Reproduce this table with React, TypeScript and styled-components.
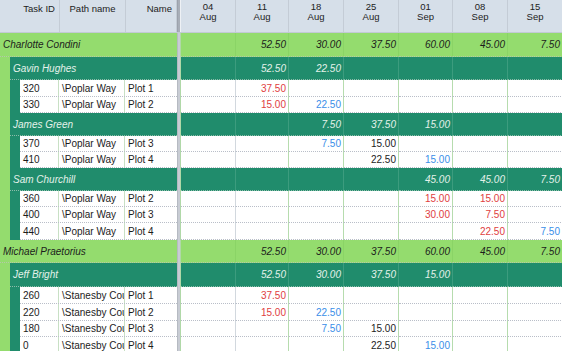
import React from 'react';
import styled, { createGlobalStyle, css } from 'styled-components';

type Tone = 'red' | 'blue' | 'black';
type Val = { v: string; tone?: Tone } | null;

type Row =
  | { kind: 'top'; name: string; h: number; vals: (string | null)[] }
  | { kind: 'sub'; name: string; h: number; vals: (string | null)[] }
  | { kind: 'task'; id: string; path: string; plot: string; h: number; vals: Val[] };

const weeks = [
  { d: '04', m: 'Aug', w: 55 },
  { d: '11', m: 'Aug', w: 53 },
  { d: '18', m: 'Aug', w: 55 },
  { d: '25', m: 'Aug', w: 55 },
  { d: '01', m: 'Sep', w: 54 },
  { d: '08', m: 'Sep', w: 55 },
  { d: '15', m: 'Sep', w: 55 },
];

const r = (v: string): Val => ({ v, tone: 'red' });
const b = (v: string): Val => ({ v, tone: 'blue' });
const k = (v: string): Val => ({ v, tone: 'black' });

const rows: Row[] = [
  { kind: 'top', name: 'Charlotte Condini', h: 24, vals: [null, '52.50', '30.00', '37.50', '60.00', '45.00', '7.50'] },
  { kind: 'sub', name: 'Gavin Hughes', h: 23, vals: [null, '52.50', '22.50', null, null, null, null] },
  { kind: 'task', id: '320', path: '\\Poplar Way', plot: 'Plot 1', h: 17, vals: [null, r('37.50'), null, null, null, null, null] },
  { kind: 'task', id: '330', path: '\\Poplar Way', plot: 'Plot 2', h: 16, vals: [null, r('15.00'), b('22.50'), null, null, null, null] },
  { kind: 'sub', name: 'James Green', h: 23, vals: [null, null, '7.50', '37.50', '15.00', null, null] },
  { kind: 'task', id: '370', path: '\\Poplar Way', plot: 'Plot 3', h: 16, vals: [null, null, b('7.50'), k('15.00'), null, null, null] },
  { kind: 'task', id: '410', path: '\\Poplar Way', plot: 'Plot 4', h: 16, vals: [null, null, null, k('22.50'), b('15.00'), null, null] },
  { kind: 'sub', name: 'Sam Churchill', h: 23, vals: [null, null, null, null, '45.00', '45.00', '7.50'] },
  { kind: 'task', id: '360', path: '\\Poplar Way', plot: 'Plot 2', h: 16, vals: [null, null, null, null, r('15.00'), r('15.00'), null] },
  { kind: 'task', id: '400', path: '\\Poplar Way', plot: 'Plot 3', h: 16, vals: [null, null, null, null, r('30.00'), r('7.50'), null] },
  { kind: 'task', id: '440', path: '\\Poplar Way', plot: 'Plot 4', h: 17, vals: [null, null, null, null, null, r('22.50'), b('7.50')] },
  { kind: 'top', name: 'Michael Praetorius', h: 23, vals: [null, '52.50', '30.00', '37.50', '60.00', '45.00', '7.50'] },
  { kind: 'sub', name: 'Jeff Bright', h: 24, vals: [null, '52.50', '30.00', '37.50', '15.00', null, null] },
  { kind: 'task', id: '260', path: '\\Stanesby Court', plot: 'Plot 1', h: 17, vals: [null, r('37.50'), null, null, null, null, null] },
  { kind: 'task', id: '220', path: '\\Stanesby Court', plot: 'Plot 2', h: 17, vals: [null, r('15.00'), b('22.50'), null, null, null, null] },
  { kind: 'task', id: '180', path: '\\Stanesby Court', plot: 'Plot 3', h: 16, vals: [null, null, b('7.50'), k('15.00'), null, null, null] },
  { kind: 'task', id: '0', path: '\\Stanesby Court', plot: 'Plot 4', h: 17, vals: [null, null, null, k('22.50'), b('15.00'), null, null] },
];

const LIGHT = '#94dc6e';
const DARK = '#208c6c';

const GlobalStyle = createGlobalStyle`
  html, body {
    margin: 0;
    padding: 0;
    background: #ffffff;
  }
  body {
    font-family: "Liberation Sans", Arial, sans-serif;
    color: #1e1e1e;
  }
`;

const Sheet = styled.div`
  width: 562px;
  height: 351px;
  overflow: hidden;
  background: #ffffff;
`;

const HeaderRow = styled.div`
  display: flex;
  height: 33px;
  background: #d6dfe9;
  box-sizing: border-box;
  border-bottom: 1px solid #c2cad5;
`;

const HeadCell = styled.div<{ $w: number; $align: string }>`
  flex: none;
  width: ${({ $w }) => $w}px;
  box-sizing: border-box;
  border-right: 1px solid #c4ccd6;
  padding: 3px 4px 0 4px;
  font-size: 9.5px;
  line-height: 11px;
  color: #222;
  text-align: ${({ $align }) => $align};
  white-space: nowrap;
`;

const DateHead = styled.div<{ $w: number }>`
  flex: none;
  width: ${({ $w }) => $w}px;
  box-sizing: border-box;
  border-right: 1px solid #c4ccd6;
  padding-top: 2px;
  font-size: 9.5px;
  line-height: 10px;
  color: #222;
  text-align: center;
`;

const Splitter = styled.div<{ $head?: boolean }>`
  flex: none;
  width: 4px;
  box-sizing: border-box;
  background: ${({ $head }) => ($head ? '#a8aeb8' : '#c8ccd4')};
  border-left: 1px solid ${({ $head }) => ($head ? '#9ca2ac' : '#b6bac2')};
  border-right: 1px solid ${({ $head }) => ($head ? '#eef1f5' : '#b0d8a8')};
`;

const Line = styled.div<{ $h: number; $bg: string }>`
  display: flex;
  height: ${({ $h }) => $h}px;
  background: ${({ $bg }) => $bg};
`;

const Left = styled.div`
  flex: none;
  width: 177px;
  display: flex;
  box-sizing: border-box;
`;

const Band = styled.div<{ $bg: string }>`
  flex: none;
  width: 10px;
  background: ${({ $bg }) => $bg};
`;

const GroupName = styled.div<{ $dark?: boolean }>`
  flex: 1;
  display: flex;
  align-items: center;
  padding-left: 3px;
  font-size: 10px;
  font-style: italic;
  color: ${({ $dark }) => ($dark ? '#e4f2ea' : '#1c1c1c')};
  white-space: nowrap;
  box-sizing: border-box;
  border-bottom: 1px dotted ${({ $dark }) => ($dark ? '#8cbcaa' : '#b4c8a8')};
`;

const TaskCells = styled.div`
  flex: 1;
  display: flex;
  background: #ffffff;
  box-sizing: border-box;
  border-bottom: 1px dotted #b9bec8;
`;

const TaskCell = styled.div<{ $w: number; $last?: boolean }>`
  flex: none;
  width: ${({ $w }) => $w}px;
  box-sizing: border-box;
  padding-left: 3px;
  display: flex;
  align-items: center;
  font-size: 10px;
  color: #1c1c1c;
  white-space: nowrap;
  overflow: hidden;
  ${({ $last }) =>
    !$last &&
    css`
      border-right: 1px solid #c8e0c4;
    `}
`;

const toneColor: Record<Tone, string> = {
  red: '#e0403e',
  blue: '#3a8ee8',
  black: '#1c1c1c',
};

const Cell = styled.div<{ $w: number; $kind: Row['kind']; $tone?: Tone; $first?: boolean }>`
  flex: none;
  width: ${({ $w }) => $w}px;
  box-sizing: border-box;
  display: flex;
  align-items: center;
  justify-content: flex-end;
  padding-right: 2px;
  font-size: 10px;
  white-space: nowrap;
  border-right: 1px solid
    ${({ $kind, $first }) =>
      $kind === 'task' ? ($first ? '#d2d8de' : '#b6dcae') : $kind === 'sub' ? '#3c9c7e' : '#8ad466'};
  border-bottom: 1px dotted
    ${({ $kind }) => ($kind === 'task' ? '#b9bec8' : $kind === 'sub' ? '#8cbcaa' : '#b4c8a8')};
  ${({ $kind, $tone }) =>
    $kind === 'task'
      ? css`
          color: ${toneColor[$tone ?? 'black']};
        `
      : css`
          font-style: italic;
          color: ${$kind === 'sub' ? '#e4f2ea' : '#1c1c1c'};
        `}
`;

function DateCells({ row }: { row: Row }) {
  return (
    <>
      {weeks.map((wk, i) => {
        const raw = row.vals[i];
        const text = raw === null ? '' : typeof raw === 'string' ? raw : raw.v;
        const tone = raw !== null && typeof raw !== 'string' ? raw.tone : undefined;
        return (
          <Cell key={i} $w={wk.w} $kind={row.kind} $tone={tone} $first={i === 0}>
            {text}
          </Cell>
        );
      })}
    </>
  );
}

function GridRow({ row }: { row: Row }) {
  if (row.kind === 'top') {
    return (
      <Line $h={row.h} $bg={LIGHT}>
        <Left>
          <GroupName>{row.name}</GroupName>
        </Left>
        <Splitter />
        <DateCells row={row} />
      </Line>
    );
  }
  if (row.kind === 'sub') {
    return (
      <Line $h={row.h} $bg={DARK}>
        <Left>
          <Band $bg={LIGHT} />
          <GroupName $dark>{row.name}</GroupName>
        </Left>
        <Splitter />
        <DateCells row={row} />
      </Line>
    );
  }
  return (
    <Line $h={row.h} $bg="#ffffff">
      <Left>
        <Band $bg={LIGHT} />
        <Band $bg={DARK} />
        <TaskCells>
          <TaskCell $w={39}>{row.id}</TaskCell>
          <TaskCell $w={66}>{row.path}</TaskCell>
          <TaskCell $w={52} $last>
            {row.plot}
          </TaskCell>
        </TaskCells>
      </Left>
      <Splitter />
      <DateCells row={row} />
    </Line>
  );
}

export default function App() {
  return (
    <>
      <GlobalStyle />
      <Sheet>
        <HeaderRow>
          <HeadCell $w={60} $align="right">
            Task ID
          </HeadCell>
          <HeadCell $w={66} $align="center">
            Path name
          </HeadCell>
          <HeadCell $w={51} $align="right">
            Name
          </HeadCell>
          <Splitter $head />
          {weeks.map((wk) => (
            <DateHead key={wk.d + wk.m} $w={wk.w}>
              {wk.d}
              <br />
              {wk.m}
            </DateHead>
          ))}
        </HeaderRow>
        {rows.map((row, i) => (
          <GridRow key={i} row={row} />
        ))}
      </Sheet>
    </>
  );
}
